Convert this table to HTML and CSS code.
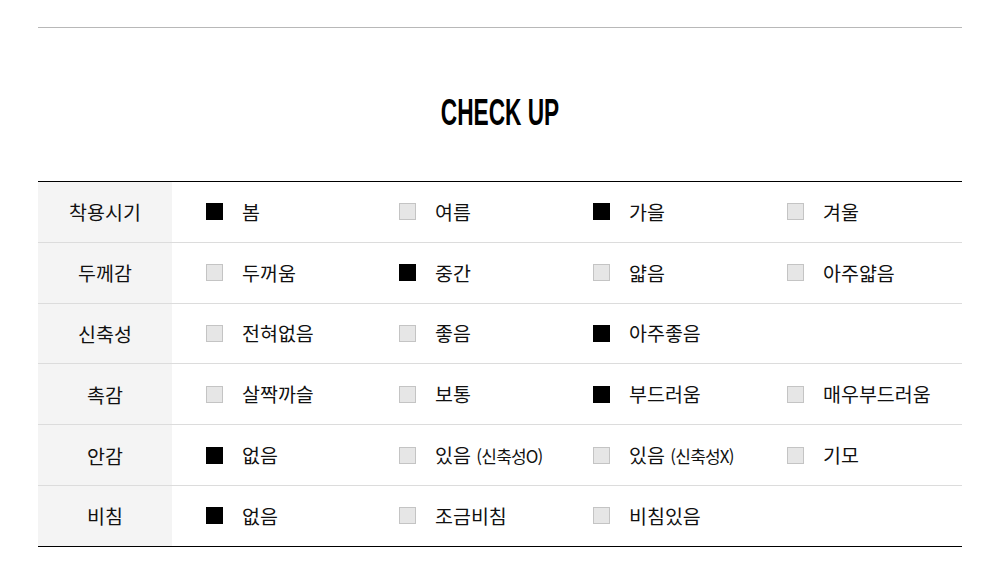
FILE: index.html
```html
<!DOCTYPE html>
<html lang="ko">
<head>
<meta charset="utf-8">
<link rel="stylesheet" href="styles.css">
</head>
<body>
<div class="wrap">
  <h2 class="title"><span class="title-text">CHECK UP</span></h2>
  <div class="table">
    <div class="row">
      <div class="label">착용시기</div>
      <div class="values">
        <div class="opt"><span class="box on"></span><span class="txt">봄</span></div>
        <div class="opt"><span class="box"></span><span class="txt">여름</span></div>
        <div class="opt"><span class="box on"></span><span class="txt">가을</span></div>
        <div class="opt"><span class="box"></span><span class="txt">겨울</span></div>
      </div>
    </div>
    <div class="row">
      <div class="label">두께감</div>
      <div class="values">
        <div class="opt"><span class="box"></span><span class="txt">두꺼움</span></div>
        <div class="opt"><span class="box on"></span><span class="txt">중간</span></div>
        <div class="opt"><span class="box"></span><span class="txt">얇음</span></div>
        <div class="opt"><span class="box"></span><span class="txt">아주얇음</span></div>
      </div>
    </div>
    <div class="row">
      <div class="label">신축성</div>
      <div class="values">
        <div class="opt"><span class="box"></span><span class="txt">전혀없음</span></div>
        <div class="opt"><span class="box"></span><span class="txt">좋음</span></div>
        <div class="opt"><span class="box on"></span><span class="txt">아주좋음</span></div>
      </div>
    </div>
    <div class="row">
      <div class="label">촉감</div>
      <div class="values">
        <div class="opt"><span class="box"></span><span class="txt">살짝까슬</span></div>
        <div class="opt"><span class="box"></span><span class="txt">보통</span></div>
        <div class="opt"><span class="box on"></span><span class="txt">부드러움</span></div>
        <div class="opt"><span class="box"></span><span class="txt">매우부드러움</span></div>
      </div>
    </div>
    <div class="row">
      <div class="label">안감</div>
      <div class="values">
        <div class="opt"><span class="box on"></span><span class="txt">없음</span></div>
        <div class="opt"><span class="box"></span><span class="txt">있음 <span class="small">(신축성O)</span></span></div>
        <div class="opt"><span class="box"></span><span class="txt">있음 <span class="small">(신축성X)</span></span></div>
        <div class="opt"><span class="box"></span><span class="txt">기모</span></div>
      </div>
    </div>
    <div class="row last">
      <div class="label">비침</div>
      <div class="values">
        <div class="opt"><span class="box on"></span><span class="txt">없음</span></div>
        <div class="opt"><span class="box"></span><span class="txt">조금비침</span></div>
        <div class="opt"><span class="box"></span><span class="txt">비침있음</span></div>
      </div>
    </div>
  </div>
</div>
</body>
</html>
```

FILE: styles.css
```css
* { box-sizing: border-box; }
html, body { margin: 0; padding: 0; background: #fff; }
body {
  font-family: "Noto Sans CJK KR", "Noto Sans", sans-serif;
  color: #111;
}
.wrap {
  width: 924px;
  margin: 27px auto 0;
  border-top: 1px solid #b8b8b8;
}
.title {
  margin: 0;
  padding-top: 64px;
  height: 153px;
  text-align: center;
  font-family: "Liberation Sans Narrow", "Liberation Sans", sans-serif;
  font-weight: bold;
  font-size: 36px;
  line-height: 42px;
  color: #000;
}
.title-text {
  display: inline-block;
  transform: scaleX(0.63);
}
.table {
  border-top: 1px solid #000;
}
.row {
  display: grid;
  grid-template-columns: 134px 1fr;
  height: 60.8px;
  border-bottom: 1px solid #dcdcdc;
}
.row.last { border-bottom-color: #000; }
.label {
  background: #f4f4f4;
  display: flex;
  align-items: center;
  justify-content: center;
  font-size: 19.5px;
  color: #111;
}
.values {
  display: grid;
  grid-template-columns: 193px 194px 194px 1fr;
  padding-left: 34px;
  align-items: center;
}
.opt {
  display: flex;
  align-items: center;
  gap: 19px;
}
.box {
  width: 17px;
  height: 17px;
  flex: none;
  background: #e6e6e6;
  border: 1px solid #c4c4c4;
}
.box.on {
  background: #000;
  border-color: #000;
}
.txt {
  font-size: 19.5px;
  line-height: 24px;
  color: #111;
  white-space: nowrap;
}
.small {
  font-size: 17px;
  letter-spacing: -0.8px;
}
```
